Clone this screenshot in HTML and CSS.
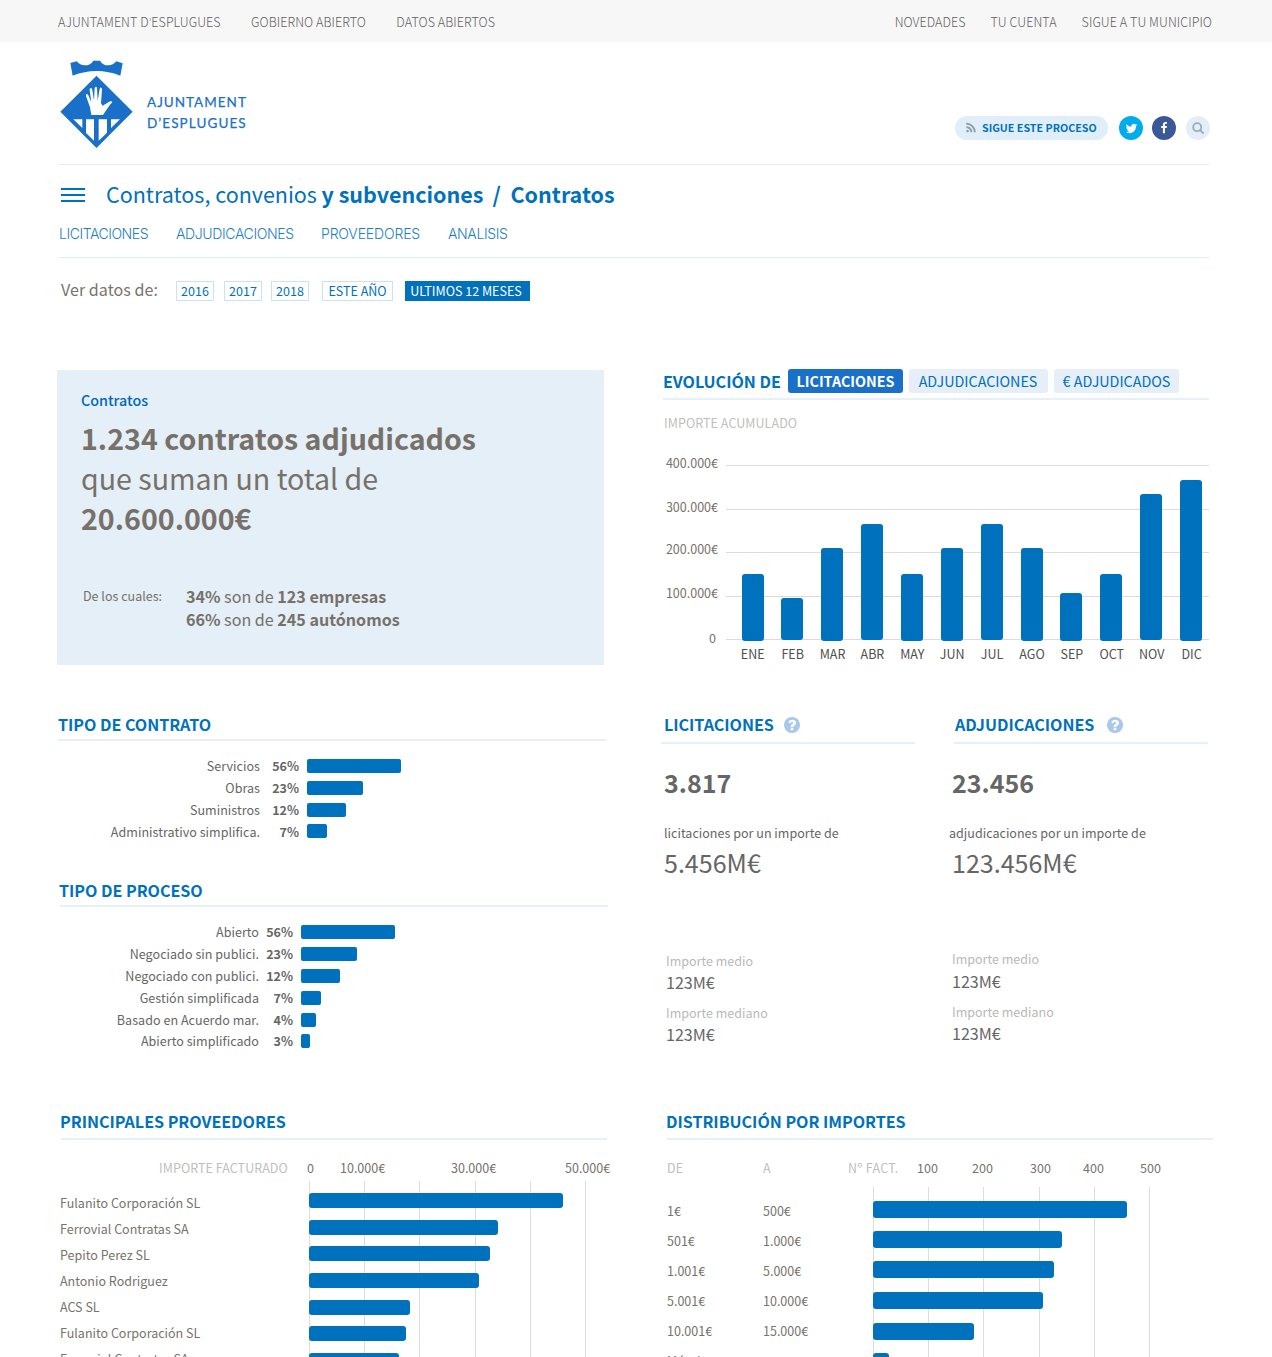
FILE: index.html
```html
<!DOCTYPE html>
<html lang="es">
<head>
<meta charset="utf-8">
<title>Contratos - Ajuntament d’Esplugues</title>
<link rel="stylesheet" href="styles.css">
</head>
<body>
<nav class="topbar">
  <div class="topbar-left"><a>AJUNTAMENT D<span class="apos">’</span>ESPLUGUES</a><a>GOBIERNO ABIERTO</a><a>DATOS ABIERTOS</a></div>
  <div class="topbar-right"><a>NOVEDADES</a><a>TU CUENTA</a><a>SIGUE A TU MUNICIPIO</a></div>
</nav>

<header class="header">
  <div class="brand">
    <svg class="crest" viewBox="30 15 219 264">
      <g fill="#1a70c9">
        <path d="M61 24L80 19Q90 31 104 31Q122 31 130 17H150Q158 31 175 31Q189 31 199 19L218 25L211 62Q140 34 68 62Z"/>
        <path d="M139.500 62L248 170.500L139.500 279L31 170.500Z"/>
      </g>
      <g fill="#fff">
        <path d="M124 180L120 157L108 123Q107 118 110 117Q113 117 115 121L124 142L119 105Q119 99 122 99Q126 99 127 104L132 137L134 100Q135 95 138 95Q141 95 141 100L143 137L149 102Q150 97 153 98Q157 99 156 104L153 145L158 152L176 141Q184 137 187 141Q187 144 181 148L169 165L159 180Z"/>
        <path d="M70 193H97V219ZM108 193H132V257L108 234ZM146 193H171V233L146 257ZM183 193H210L183 219Z"/>
      </g>
    </svg>
    <div class="brand-name"><span class="bn1">AJUNTAMENT</span><span class="bn2">D’ESPLUGUES</span></div>
  </div>
  <div class="social">
    <a class="follow"><svg viewBox="0 0 1792 1792" width="12" height="12"><path fill="#8f9aa3" d="M576 1344q0 80-56 136t-136 56-136-56-56-136 56-136 136-56 136 56 56 136zm512 123q2 28-17 48-18 21-47 21h-135q-25 0-43-16.500t-20-41.500q-22-229-184.500-391.500t-391.500-184.500q-25-2-41.500-20t-16.500-43v-135q0-29 21-47 17-17 43-17h5q160 13 306 80.500t259 181.500q114 113 181.500 259t80.500 306zm512 2q2 27-18 47-18 20-46 20h-143q-26 0-44.500-17.500t-19.500-42.500q-12-215-101-408.500t-231.500-336-336-231.500-408.500-102q-25-1-42.500-19.500t-17.500-43.500v-143q0-28 20-46 18-18 44-18h3q262 13 501.500 120t425.500 294q187 186 294 425.500t120 501.500z"/></svg><span>SIGUE ESTE PROCESO</span></a>
    <a class="round tw"><svg viewBox="0 0 1792 1792" width="13" height="13"><path fill="#fff" d="M1684 408q-67 98-162 167 1 14 1 42 0 130-38 259.500t-115.500 248.500-184.500 210.500-258 146-323 54.500q-271 0-496-145 35 4 78 4 225 0 401-138-105-2-188-64.500t-114-159.500q33 5 61 5 43 0 85-11-112-23-185.500-111.500t-73.500-205.500v-4q68 38 146 41-66-44-105-115t-39-154q0-88 44-163 121 149 294.500 238.500t371.500 99.500q-8-38-8-74 0-134 94.500-228.500t228.500-94.500q140 0 236 102 109-21 205-78-37 115-142 178 93-10 186-50z"/></svg></a>
    <a class="round fb"><svg viewBox="0 0 1792 1792" width="12" height="12"><path fill="#fff" d="M1343 12v264h-157q-86 0-116 36t-30 108v189h293l-39 296h-254v759h-306v-759h-255v-296h255v-218q0-186 104-288.500t277-102.500q147 0 228 12z"/></svg></a>
    <a class="round sr"><svg viewBox="0 0 12 12" width="12" height="12" fill="none" stroke="#9aabbb" stroke-width="1.800"><circle cx="5.200" cy="5.200" r="4"/><path d="M8.200 8.200L11 11" stroke-linecap="round"/></svg></a>
  </div>
</header>

<div class="titlebar">
  <div class="title-row">
    <div class="menu"><i></i><i></i><i></i></div>
    <h1><span class="t1">Contratos, convenios</span><b class="t2">y subvenciones</b><b class="t3">/</b><b class="t4">Contratos</b></h1>
  </div>
  <div class="subnav"><a class="n1">LICITACIONES</a><a>ADJUDICACIONES</a><a class="n3">PROVEEDORES</a><a>ANALISIS</a></div>
</div>

<div class="filters">
  <span class="filters-label">Ver datos de:</span>
  <a class="f y1">2016</a><a class="f y2">2017</a><a class="f y3">2018</a><a class="f y4">ESTE AÑO</a><a class="f on">ULTIMOS 12 MESES</a>
</div>

<main class="board">
  <section class="summary">
    <h4>Contratos</h4>
    <p class="big"><b>1.234 contratos adjudicados</b><br>que suman un total de<br><b>20.600.000€</b></p>
    <div class="split">
      <span class="split-label">De los cuales:</span>
      <div class="split-list"><div><b>34%</b> son de <b>123 empresas</b></div><div><b>66%</b> son de <b>245 autónomos</b></div></div>
    </div>
  </section>

  <section class="evolution">
    <div class="evo-head"><h2>EVOLUCIÓN DE</h2><a class="tab on">LICITACIONES</a><a class="tab tab2">ADJUDICACIONES</a><a class="tab tab3">€ ADJUDICADOS</a></div>
    <div class="caption">IMPORTE ACUMULADO</div>
    <div class="evo-chart">
      <div class="yaxis"><span>400.000€</span><span>300.000€</span><span>200.000€</span><span>100.000€</span><span class="zero">0</span></div>
      <div class="evo-plot">
        <div class="cols">
          <i style="height:67px"></i><i class="up" style="height:42px"></i><i style="height:93px"></i><i class="up" style="height:116px"></i><i style="height:67px"></i><i style="height:93px"></i><i class="up" style="height:116px"></i><i style="height:93px"></i><i style="height:48px"></i><i style="height:67px"></i><i class="up" style="height:146px"></i><i style="height:161px"></i>
        </div>
        <div class="months"><span>ENE</span><span>FEB</span><span>MAR</span><span>ABR</span><span>MAY</span><span>JUN</span><span>JUL</span><span>AGO</span><span>SEP</span><span>OCT</span><span>NOV</span><span>DIC</span></div>
      </div>
    </div>
  </section>

  <div class="types">
    <section class="type contract">
      <h2>TIPO DE CONTRATO</h2>
      <div class="rows">
        <div class="row"><span>Servicios</span><b>56%</b><i style="width:94px"></i></div>
        <div class="row"><span>Obras</span><b>23%</b><i style="width:56px"></i></div>
        <div class="row"><span>Suministros</span><b>12%</b><i style="width:39px"></i></div>
        <div class="row last"><span>Administrativo simplifica.</span><b>7%</b><i style="width:20px"></i></div>
      </div>
    </section>
    <section class="type process">
      <h2>TIPO DE PROCESO</h2>
      <div class="rows">
        <div class="row"><span>Abierto</span><b>56%</b><i style="width:94px"></i></div>
        <div class="row"><span>Negociado sin publici.</span><b>23%</b><i style="width:56px"></i></div>
        <div class="row"><span>Negociado con publici.</span><b>12%</b><i style="width:39px"></i></div>
        <div class="row"><span>Gestión simplificada</span><b>7%</b><i style="width:20px"></i></div>
        <div class="row"><span>Basado en Acuerdo mar.</span><b>4%</b><i style="width:15px"></i></div>
        <div class="row last"><span>Abierto simplificado</span><b>3%</b><i style="width:9px"></i></div>
      </div>
    </section>
  </div>

  <div class="stats">
    <section class="stat tenders">
      <div class="stat-head"><h2>LICITACIONES</h2><svg class="help" viewBox="128 128 1536 1536"><path d="M1024 1376v-192q0-14-9-23t-23-9h-192q-14 0-23 9t-9 23v192q0 14 9 23t23 9h192q14 0 23-9t9-23zm256-672q0-88-55.500-163t-138.500-116-170-41q-243 0-371 213-15 24 8 42l132 100q7 6 19 6 16 0 25-12 53-68 86-92 34-24 86-24 48 0 85.500 26t37.500 59q0 38-20 61t-68 45q-63 28-115.500 86.500t-52.500 125.500v36q0 14 9 23t23 9h192q14 0 23-9t9-23q0-19 21.500-49.500t54.500-49.500q32-18 49-28.500t46-35 44.500-48 28-60.500 12.500-81zm384 192q0 209-103 385.500t-279.500 279.500-385.500 103-385.500-103-279.500-279.500-103-385.500 103-385.500 279.500-279.500 385.500-103 385.500 103 279.500 279.500 103 385.500z"/></svg></div>
      <div class="count">3.817</div>
      <div class="desc">licitaciones por un importe de</div>
      <div class="amount">5.456M€</div>
      <dl><dt>Importe medio</dt><dd>123M€</dd><dt>Importe mediano</dt><dd>123M€</dd></dl>
    </section>
    <section class="stat awards">
      <div class="stat-head"><h2>ADJUDICACIONES</h2><svg class="help" viewBox="128 128 1536 1536"><path d="M1024 1376v-192q0-14-9-23t-23-9h-192q-14 0-23 9t-9 23v192q0 14 9 23t23 9h192q14 0 23-9t9-23zm256-672q0-88-55.500-163t-138.500-116-170-41q-243 0-371 213-15 24 8 42l132 100q7 6 19 6 16 0 25-12 53-68 86-92 34-24 86-24 48 0 85.500 26t37.500 59q0 38-20 61t-68 45q-63 28-115.500 86.500t-52.500 125.500v36q0 14 9 23t23 9h192q14 0 23-9t9-23q0-19 21.500-49.500t54.500-49.500q32-18 49-28.500t46-35 44.500-48 28-60.500 12.500-81zm384 192q0 209-103 385.500t-279.500 279.500-385.500 103-385.500-103-279.500-279.500-103-385.500 103-385.500 279.500-279.500 385.500-103 385.500 103 279.500 279.500 103 385.500z"/></svg></div>
      <div class="count">23.456</div>
      <div class="desc">adjudicaciones por un importe de</div>
      <div class="amount">123.456M€</div>
      <dl><dt>Importe medio</dt><dd>123M€</dd><dt>Importe mediano</dt><dd>123M€</dd></dl>
    </section>
  </div>

  <section class="suppliers">
    <h2>PRINCIPALES PROVEEDORES</h2>
    <div class="sup-axis"><span class="muted">IMPORTE FACTURADO</span><span>0</span><span>10.000€</span><span>30.000€</span><span>50.000€</span></div>
    <div class="sup-body">
      <div class="names"><span>Fulanito Corporación SL</span><span>Ferrovial Contratas SA</span><span>Pepito Perez SL</span><span>Antonio Rodriguez</span><span>ACS SL</span><span>Fulanito Corporación SL</span><span>Ferrovial Contratas SA</span></div>
      <div class="plot"><i style="width:254px"></i><i style="width:189px"></i><i style="width:181px"></i><i style="width:170px"></i><i style="width:101px"></i><i style="width:97px"></i><i style="width:90px"></i></div>
    </div>
  </section>

  <section class="amounts">
    <h2>DISTRIBUCIÓN POR IMPORTES</h2>
    <div class="amt-axis"><span class="muted">DE</span><span class="muted">A</span><span class="muted fact">Nº FACT.</span><span>100</span><span>200</span><span>300</span><span>400</span><span>500</span></div>
    <div class="amt-body">
      <div class="ranges">
        <span>1€</span><span>500€</span><span>501€</span><span>1.000€</span><span>1.001€</span><span>5.000€</span><span>5.001€</span><span>10.000€</span><span>10.001€</span><span>15.000€</span><span>Más de 15.000€</span>
      </div>
      <div class="plot"><i style="width:254px"></i><i style="width:189px"></i><i style="width:181px"></i><i style="width:170px"></i><i style="width:101px"></i><i style="width:16px"></i></div>
    </div>
  </section>
</main>
</body>
</html>
```
FILE: styles.css
```css
* { box-sizing: border-box; }
html, body { margin: 0; padding: 0; }
body {
  width: 1272px; height: 1357px; overflow: hidden; background: #fff;
  font-family: "Noto Sans CJK SC", "Noto Sans", sans-serif;
  font-size: 12.530px; line-height: 19px; color: #666;
  white-space: nowrap;
}
h1, h2, h4, p, dl, dd, dt { margin: 0; padding: 0; font-weight: 400; }
b { font-weight: 700; }
i { display: block; font-style: normal; }
svg { display: block; flex: none; }
h2 { font-size: 16.100px; line-height: 24px; font-weight: 700; color: #0071bc; letter-spacing: -0.030px; }
.muted, .caption { color: #c0bfbc; letter-spacing: 0.050px; }

/* Top navigation */
.topbar { height: 42px; background: #f7f7f7; padding: 12px 60px 0 58px; display: flex; justify-content: space-between; font-weight: 300; color: #5e5e5e; letter-spacing: 0.060px; }
.topbar-left { display: flex; gap: 30.400px; }
.topbar-right { display: flex; gap: 25px; }
.apos { font-family: Lato, sans-serif; line-height: 1; }

/* Brand and social links */
.header { height: 123px; margin: 0 63px 0 58px; border-bottom: 1px solid #e2f0f5; display: flex; justify-content: space-between; }
.brand { display: flex; padding: 18px 0 0 2px; }
.crest { width: 73px; height: 88px; }
.brand-name { display: flex; flex-direction: column; margin: 32px 0 0 14px; font-family: Lato, sans-serif; font-size: 13.500px; line-height: 20.500px; color: #1a70c9; -webkit-text-stroke: 0.250px #1a70c9; }
.bn1 { letter-spacing: 1px; }
.bn2 { letter-spacing: 1.080px; }
.social { display: flex; padding-top: 74px; }
.follow { width: 153px; height: 24px; border-radius: 12px; background: #e0eefa; display: flex; align-items: center; padding-left: 10px; gap: 5px; font-size: 10.700px; line-height: 16px; font-weight: 700; color: #0071bc; margin-right: 11px; }
.round { width: 24px; height: 24px; border-radius: 50%; display: flex; align-items: center; justify-content: center; }
.tw { background: #00aced; margin-right: 9px; }
.fb { background: #3b5998; margin-right: 10px; }
.sr { background: #e4eef8; margin-right: -1px; }

/* Page title and sections */
.titlebar { height: 93px; margin: 0 63px 0 58px; border-bottom: 1px solid #e2f0f5; padding-top: 13px; }
.title-row { display: flex; }
.menu { width: 24px; display: flex; flex-direction: column; gap: 4px; margin: 10px 21px 0 3px; }
.menu i { height: 2px; background: #0071bc; }
h1 { display: flex; font-size: 21.500px; line-height: 31px; color: #0071bc; }
.t1 { width: 215.500px; }
.t2 { width: 171px; }
.t3 { width: 18px; }
.subnav { display: grid; grid-template-columns: 117px 145px 127px 100px; padding-left: 1px; margin-top: 16px; font: 300 14px/17px Inter, sans-serif; color: #1a80c4; letter-spacing: -0.360px; }
.n1 { letter-spacing: -0.450px; }
.n3 { letter-spacing: -0.150px; }

/* Date filters */
.filters { height: 111px; padding: 19px 0 0 61px; display: flex; align-items: flex-start; }
.filters-label { width: 115px; font-size: 16.100px; line-height: 24px; color: #7a756d; letter-spacing: 0.030px; }
.f { height: 20px; margin-top: 4px; border: 1px solid #cbe2f1; color: #0071bc; line-height: 17px; text-align: center; }
.y1, .y2, .y3 { width: 38px; }
.y1 { margin-right: 10px; }
.y2 { margin-right: 9px; }
.y3 { margin-right: 13px; }
.y4 { width: 71px; margin-right: 12px; }
.f.on { width: 125px; padding-right: 3px; background: #0071bc; border-color: #0071bc; color: #fff; }

.board { margin-left: 57px; display: grid; grid-template-columns: 551px 552px; column-gap: 53px; grid-template-rows: 343px 397px 300px; }

/* Summary card */
.summary { margin-top: 1px; width: 547px; height: 295px; background: #e4eff8; padding: 19px 24px 0; color: #777169; }
.summary h4 { font-size: 14.300px; line-height: 21px; font-weight: 500; color: #0068b8; }
.big { font-size: 28.600px; line-height: 40px; margin-top: 8px; }
.split { display: flex; margin-top: 48px; }
.split-label { width: 105px; padding-left: 2px; }
.split-list { font-size: 16.100px; line-height: 23px; margin-top: -1px; }

/* Evolution chart */
.evolution { padding-left: 2px; }
.evo-head { width: 546px; height: 31px; border-bottom: 2px solid #e4f0fa; display: flex; }
.evo-head h2 { width: 125px; }
.tab { height: 24px; border-radius: 3px; background: #e6eef8; color: #0071bc; font-size: 14.300px; line-height: 23px; text-align: center; width: 139px; padding-right: 1px; margin-right: 6px; }
.tab.on { width: 115px; padding: 0; background: #1a6fc9; color: #fff; font-weight: 700; }
.tab3 { width: 125px; padding: 0; }
.caption { margin: 13px 0 0 1px; }
.evo-chart { display: flex; margin-top: 21px; }
.yaxis { width: 55px; margin-right: 8px; display: grid; grid-template-rows: 44px 42px 44px 45px 19px; text-align: right; color: #77736c; }
.yaxis .zero { padding-right: 2px; }
.evo-plot { width: 483px; margin-top: 12px; }
.cols {
  height: 176px; padding-left: 16px; display: grid; align-items: end;
  grid-template-columns: 39px repeat(6, 40px) 39px repeat(4, 40px);
  background: linear-gradient(#dcdcdc, #dcdcdc) 0 0/100% 1px no-repeat, linear-gradient(#dcdcdc, #dcdcdc) 0 44px/100% 1px no-repeat, linear-gradient(#dcdcdc, #dcdcdc) 0 87px/100% 1px no-repeat, linear-gradient(#dcdcdc, #dcdcdc) 0 131px/100% 1px no-repeat, linear-gradient(#dcdcdc, #dcdcdc) 0 174px/100% 1px no-repeat;
}
.cols i { width: 22px; border-radius: 3px; background: #0071bc; }
.cols .up { margin-bottom: 1px; }
.months { margin-top: 3px; padding-left: 6.800px; display: grid; grid-template-columns: repeat(12, 39.900px); text-align: center; color: #505050; }

/* Contract and process types */
.type h2 { height: 29px; border-bottom: 2px solid #e4f0fa; width: 548px; margin-left: 1px; }
.process h2 { margin-left: 3px; text-indent: -1px; }
.contract { height: 166px; }
.rows { padding-top: 15px; }
.row { height: 22px; display: flex; }
.row span { width: 203px; text-align: right; letter-spacing: 0.040px; }
.row b { width: 39px; text-align: right; margin-right: 8px; }
.row i { height: 14px; margin-top: 3px; border-radius: 2px; background: #0071bc; }
.contract .row.last i { margin-top: 2px; }
.process .row span { width: 202px; }
.process .row b { width: 34px; }
.process .row.last { margin-top: -1px; }

/* Totals */
.stats { display: flex; gap: 39px; }
.stat { width: 254px; }
.stat-head { height: 32px; border-bottom: 2px solid #e4f0fa; display: flex; padding-left: 3px; }
.stat-head h2 { width: 120px; }
.help { width: 16px; height: 16px; margin-top: 5px; fill: #a8c8ea; }
.count { font-size: 25.050px; line-height: 36px; font-weight: 700; margin: 20px 0 0 3px; }
.desc { margin: 23px 0 0 3px; letter-spacing: 0.020px; }
.amount { font-size: 25.050px; line-height: 36px; margin: 2px 0 0 3px; }
dl { margin: 71px 0 0 5px; }
dt { color: #b9b9b9; }
dd { font-size: 16.100px; line-height: 24px; margin: 0 0 9px; }
.awards .stat-head { padding-left: 1px; width: 254px; }
.awards .stat-head h2 { width: 152px; }
.awards .count, .awards .amount { margin-left: -2px; }
.awards .desc { margin-left: -5px; }
.awards dl { margin: 69px 0 0 -2px; }
.awards dd { padding-top: 1px; }
.awards dd:last-child { padding-top: 0; }

/* Suppliers */
.suppliers h2 { height: 31px; width: 546px; margin-left: 4px; text-indent: -1px; border-bottom: 2px solid #e4f0fa; }
.sup-axis { display: grid; grid-template-columns: 148px 33px 111px 114px 60px; margin: 18px 0 0 102px; color: #77736c; }
.sup-body { display: flex; margin-top: 4px; }
.names { width: 252px; padding: 12px 0 0 3px; display: grid; grid-auto-rows: 26px; color: #77736c; align-content: start; }
.plot {
  height: 200px; width: 278px; display: grid; align-content: start;
  background: linear-gradient(#dcdcdc, #dcdcdc) 0 0/1px 100% no-repeat, linear-gradient(#dcdcdc, #dcdcdc) 55px 0/1px 100% no-repeat, linear-gradient(#dcdcdc, #dcdcdc) 110px 0/1px 100% no-repeat, linear-gradient(#dcdcdc, #dcdcdc) 166px 0/1px 100% no-repeat, linear-gradient(#dcdcdc, #dcdcdc) 221px 0/1px 100% no-repeat, linear-gradient(#dcdcdc, #dcdcdc) 276px 0/1px 100% no-repeat;
}
.plot i { border-radius: 3px; background: #0071bc; }
.suppliers .plot { padding-top: 12px; grid-template-rows: 27px 26px 27px 27px 26px 27px 27px; }
.suppliers .plot i { height: 15px; }

/* Amount ranges */
.amounts h2 { height: 31px; width: 546px; margin-left: 6px; text-indent: -1px; border-bottom: 2px solid #e4f0fa; }
.amt-axis { display: grid; grid-template-columns: 96px 85px 69px 55px 58px 53px 57px 40px; margin: 18px 0 0 6px; color: #77736c; }
.fact { letter-spacing: 0.300px; }
.amt-body { display: flex; margin-top: 10px; }
.ranges { width: 212px; padding: 14px 0 0 6px; display: grid; grid-template-columns: 96px 110px; grid-auto-rows: 30px; align-content: start; color: #77736c; }
.amounts .plot { padding-top: 14px; grid-template-rows: 30px 30px 31px 31px 30px 30px; }
.amounts .plot i { height: 17px; }
```
